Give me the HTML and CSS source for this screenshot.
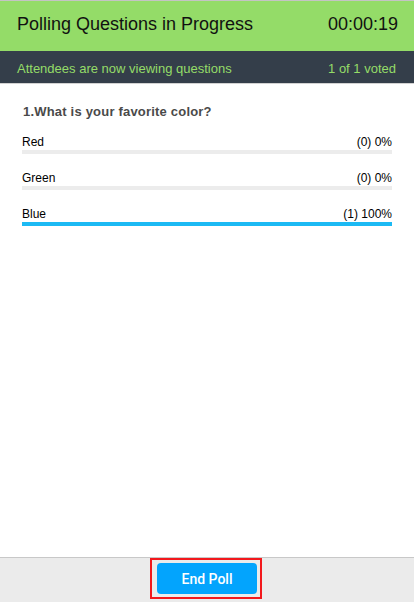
FILE: index.html
```html
<!DOCTYPE html>
<html lang="en">
<head>
<meta charset="utf-8">
<title>Polling Questions in Progress</title>
<link rel="stylesheet" href="styles.css">
</head>
<body>
<div class="window">
  <header class="title-bar">
    <span class="title">Polling Questions in Progress</span>
    <span class="timer">00:00:19</span>
  </header>
  <div class="status-bar">
    <span>Attendees are now viewing questions</span>
    <span>1 of 1 voted</span>
  </div>
  <main class="content">
    <h2 class="question">1.What is your favorite color?</h2>
    <div class="option">
      <div class="option-label"><span>Red</span><span>(0) 0%</span></div>
      <div class="bar"><div class="bar-fill" style="width:0%"></div></div>
    </div>
    <div class="option">
      <div class="option-label"><span>Green</span><span>(0) 0%</span></div>
      <div class="bar"><div class="bar-fill" style="width:0%"></div></div>
    </div>
    <div class="option">
      <div class="option-label"><span>Blue</span><span>(1) 100%</span></div>
      <div class="bar"><div class="bar-fill" style="width:100%"></div></div>
    </div>
  </main>
  <footer class="footer">
    <div class="highlight">
      <button class="end-poll" type="button">End Poll</button>
    </div>
  </footer>
</div>
</body>
</html>
```
FILE: styles.css
```css
* { box-sizing: border-box; }
html, body {
  margin: 0;
  padding: 0;
  height: 100%;
  background: #ffffff;
}
body {
  font-family: "Liberation Sans", Arial, Helvetica, sans-serif;
  color: #000;
}
.window {
  display: flex;
  flex-direction: column;
  height: 602px;
}
.title-bar {
  display: flex;
  justify-content: space-between;
  align-items: flex-start;
  height: 51px;
  border-top: 1px solid #c4c4c4;
  background: #94dc68;
  padding: 13px 16px 0 17px;
  font-size: 18px;
  line-height: 20px;
  color: #111;
}
.status-bar {
  display: flex;
  justify-content: space-between;
  align-items: flex-start;
  height: 33px;
  background: #343e4a;
  border-bottom: 1px solid #d2d2d2;
  padding: 10px 18px 0 17px;
  font-size: 13px;
  line-height: 15px;
  color: #94dc68;
}
.content {
  flex: 1;
  padding: 20px 22px 0 22px;
}
.question {
  margin: 0 0 15px 1px;
  font-size: 13px;
  line-height: 15px;
  font-weight: bold;
  letter-spacing: 0.2px;
  color: #4a4a4a;
}
.option {
  margin-bottom: 16px;
}
.option-label {
  display: flex;
  justify-content: space-between;
  font-size: 12px;
  line-height: 16px;
  color: #000;
}
.bar {
  height: 4px;
  background: #ececec;
}
.bar-fill {
  height: 100%;
  background: #1cbaf4;
}
.footer {
  height: 45px;
  border-top: 1px solid #c8c8c8;
  background: #ebebeb;
  display: flex;
  justify-content: center;
  align-items: flex-start;
  padding-right: 2px;
}
.highlight {
  border: 2px solid #f2181c;
  padding: 3px 3px 3px 5px;
}
.end-poll {
  display: block;
  width: 100px;
  height: 31px;
  border: none;
  border-radius: 4px;
  background: #03a4fd;
  color: #ffffff;
  font-family: Roboto, "Liberation Sans", sans-serif;
  font-weight: 500;
  font-size: 14px;
  padding: 0;
}
```
